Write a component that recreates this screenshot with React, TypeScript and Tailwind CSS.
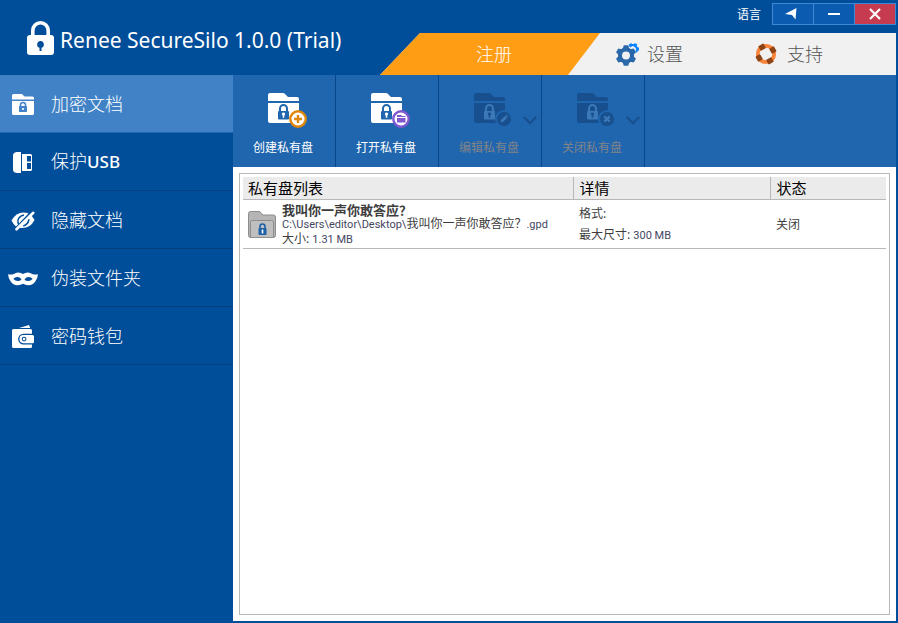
import React, { useState } from 'react';

const menuItems = [
  { id: 'encrypt', label: '加密文档', icon: <LockedFolderIcon /> },
  { id: 'usb', label: '保护', suffix: 'USB', icon: <UsbIcon /> },
  { id: 'hide', label: '隐藏文档', icon: <HiddenIcon /> },
  { id: 'disguise', label: '伪装文件夹', icon: <MaskIcon /> },
  { id: 'wallet', label: '密码钱包', icon: <WalletIcon /> },
];

const tools: { label: string; badge: Badge; disabled: boolean }[] = [
  { label: '创建私有盘', badge: 'add', disabled: false },
  { label: '打开私有盘', badge: 'open', disabled: false },
  { label: '编辑私有盘', badge: 'edit', disabled: true },
  { label: '关闭私有盘', badge: 'close', disabled: true },
];

const silos = [
  {
    name: '我叫你一声你敢答应？',
    folder: 'C:\\Users\\editor\\Desktop\\',
    extension: '.gpd',
    size: '1.31 MB',
    format: '',
    maxSize: '300 MB',
    status: '关闭',
  },
];

type Badge = 'add' | 'open' | 'edit' | 'close';

function LockedFolderIcon() {
  return (
    <svg width="22" height="21" viewBox="0 0 22 21" aria-hidden="true">
      <path fill="#fff" d="M0 5.500V1.500Q0 0 1.500 0H10l2.500 2.500h8Q22 2.500 22 4v1.500zM0 7h22v12.500q0 1.500-1.500 1.500h-19Q0 21 0 19.500z" />
      <path fill="none" stroke="#4182c6" strokeWidth="1.500" d="M8.500 13v-2a2.500 2.500 0 0 1 5 0v2" />
      <rect x="7" y="12" width="8" height="6" rx=".8" fill="#4182c6" />
      <circle cx="11" cy="15" r="1.100" fill="#fff" />
    </svg>
  );
}

function UsbIcon() {
  return (
    <svg width="20" height="21" viewBox="0 0 20 21" aria-hidden="true">
      <path fill="#fff" d="M8 0v21H3.500Q0 20.500 0 17.500v-14Q0 .5 3.500 0z" />
      <path fill="#fff" fillRule="evenodd" d="M9 2h8.500Q19 2 19 3.500v14q0 1.500-1.500 1.500H9zM14 4v5.500h4V4zm0 7v6h4v-6z" />
    </svg>
  );
}

function HiddenIcon() {
  return (
    <svg width="24" height="20" viewBox="0 0 24 20" aria-hidden="true">
      <path fill="#fff" d="M.5 9.500Q5 1.500 12.500 1.500q2.800 0 5 1L5 15.500Q2.500 13.500.500 9.500z" />
      <path fill="#fff" d="M20.300 4.500q1.700 1.500 3.200 4.500-4 8-12.500 8-1.300 0-2.400-.3z" />
      <path fill="none" stroke="#004d99" strokeWidth="1.600" d="M7.500 13a6 6 0 0 1 2-7.500Q11 4.300 13 4.300M17.800 8q0 5-5.500 7" />
      <path fill="none" stroke="#fff" strokeWidth="2.600" strokeLinecap="round" d="M22.300 1.800 5.500 18.300" />
    </svg>
  );
}

function MaskIcon() {
  return (
    <svg width="30" height="14" viewBox="0 0 31 14" aria-hidden="true">
      <path
        fill="#fff"
        fillRule="evenodd"
        d="M0 2q3 1 6.500-.5T12 .5q2 .2 3.500 1.300Q17 .7 19 .5q2-.5 5.500 1T31 2q-.3 4-2.800 7.700Q26 13.500 21 13.500q-3 0-5.500-1.500Q13 13.500 10 13.500q-5 0-7.200-3.800Q.3 6 0 2zm5.500 5Q8 9.500 11 9q2-.3 3-1.500Q12 4.800 9.500 5 7 5.200 5.500 7zM17 7.500q1 1.200 3 1.500 3 .5 5.500-2Q24 5.200 21.500 5 19 4.800 17 7.500z"
      />
    </svg>
  );
}

function WalletIcon() {
  return (
    <svg width="22" height="23" viewBox="0 0 22 23" aria-hidden="true">
      <path fill="#fff" d="M7 3 17 0l1.200 3zM1.500 4h17Q20 4 20 5.500V8.700h-8.500a5.400 5.400 0 0 0 0 10.800H20v2q0 1.500-1.500 1.500h-17Q0 23 0 21.500v-16Q0 4 1.500 4z" />
      <path fill="#fff" fillRule="evenodd" d="M11.500 10h9Q22 10 22 11.500V16.700q0 1.500-1.500 1.500h-9a4.100 4.100 0 0 1 0-8.200zm.6 1.700a2.400 2.400 0 1 0 0 4.800 2.400 2.400 0 0 0 0-4.800z" />
      <circle cx="12.100" cy="14.100" r="1.400" fill="#fff" />
    </svg>
  );
}

function ToolIcon({ badge, disabled }: { badge: Badge; disabled: boolean }) {
  const fill = disabled ? '#184f8e' : '#fff';
  return (
    <svg width="40" height="36" viewBox="0 0 40 36" aria-hidden="true">
      <path fill={fill} d="M0 8V2Q0 0 2 0h13q1 0 2 1l3 3h9q2 0 2 2v2zM0 10h31v18q0 2-2 2H2q-2 0-2-2z" />
      <path fill="none" stroke={disabled ? '#3b78b8' : '#2066af'} strokeWidth="2" d="M12 19v-3.500a3.500 3.500 0 0 1 7 0V19" />
      <rect x="10" y="18" width="11" height="8.500" rx="1" fill={disabled ? '#3b78b8' : '#2066af'} />
      <path fill={fill} d="M15.500 19.500a1.600 1.600 0 0 1 .8 3v2.300h-1.600v-2.300a1.600 1.600 0 0 1 .8-3z" />
      {disabled ? (
        <circle cx="30" cy="26" r="8" fill="#184f8e" stroke="#2066af" strokeWidth="2" />
      ) : (
        <circle cx="30" cy="26" r="7.700" fill="#fff" stroke={badge === 'add' ? '#df870c' : '#7f58cf'} strokeWidth="2.400" />
      )}
      {badge === 'add' && <path stroke="#df870c" strokeWidth="2.400" d="M30 22v8M26 26h8" />}
      {badge === 'open' && <path fill="#7f58cf" d="M26 22h4l1 1h3.500v1H26zM26 25h8.500v4.500H26z" />}
      {badge === 'edit' && <path fill="#3b78b8" d="m26.500 29.500.7-2.700 3.800-3.800 2 2-3.800 3.800zM31.500 22.500l.8-.8 2 2-.8.8z" />}
      {badge === 'close' && <path stroke="#3b78b8" strokeWidth="2.400" d="m27.300 23.300 5.400 5.400m0-5.400-5.400 5.400" />}
    </svg>
  );
}

function GearIcon() {
  return (
    <svg width="23" height="23" viewBox="0 0 23 23" aria-hidden="true">
      <path fill="none" stroke="#0a84ff" strokeWidth="2.200" d="M13.500 3.600a4 4 0 0 1 6.500 5.400" />
      <g fill="#0a84ff">
        {[-30, 30, 90].map((a) => (
          <rect key={a} x="15.500" y="0" width="3" height="3" transform={`rotate(${a} 17 6)`} />
        ))}
      </g>
      <circle cx="10" cy="12.500" r="6" fill="none" stroke="#2968a9" strokeWidth="4" />
      <g fill="#2968a9">
        {[0, 60, 120, 180, 240, 300].map((a) => (
          <path key={a} d="M6.500 6.500 7.800 2.300h4.400l1.300 4.200z" transform={`rotate(${a} 10 12.500)`} />
        ))}
      </g>
    </svg>
  );
}

function LifeRingIcon() {
  return (
    <svg width="22" height="22" viewBox="0 0 22 22" aria-hidden="true">
      <circle cx="11" cy="11" r="8.200" fill="none" stroke="#fb8439" strokeWidth="3.800" />
      {[-30, 60, 150, 240].map((a) => (
        <rect key={a} x="16.200" y="8" width="5.400" height="6" rx=".8" fill="#8f4415" transform={`rotate(${a} 11 11)`} />
      ))}
    </svg>
  );
}

function DiskIcon() {
  return (
    <svg width="28" height="27" viewBox="0 0 28 27" aria-hidden="true">
      <path fill="#b5b5b5" stroke="#8d8d8d" d="M.5 24.500v-22Q.5.500 2.500.500H11q1 0 1.800 1l2 2.500h10.700q2 0 2 2v18.500q0 2-2 2h-23q-2 0-2-2z" />
      <path fill="#bfbfbf" stroke="#8d8d8d" d="M2.500 26V11.500q0-2 2-2h19q2 0 2 2V26" />
      <path fill="none" stroke="#1f61a8" strokeWidth="1.600" d="M12 18v-2.500a2.500 2.500 0 0 1 5 0V18" />
      <rect x="10.500" y="17" width="8" height="7" rx=".8" fill="#1f61a8" />
      <path fill="#fff" d="M13.700 18.500h1.600v4h-1.600z" />
    </svg>
  );
}

function Header() {
  return (
    <header className="flex justify-between h-[75px] shrink-0">
      <div className="flex items-center gap-1.5 pl-[27px] text-white">
        <svg width="27" height="34" viewBox="0 0 27 34" aria-hidden="true">
          <path fill="none" stroke="#fff" strokeWidth="3.600" d="M5.800 16V9.500a7.700 7.700 0 0 1 15.400 0V16" />
          <rect y="14" width="27" height="20" rx="3" fill="#fff" />
          <path fill="#004d99" d="M13.500 20a3.500 3.500 0 0 1 1 6.800V30h-2v-3.200a3.500 3.500 0 0 1 1-6.800z" />
        </svg>
        <h1 className="pt-1 text-[21px] leading-7 whitespace-nowrap">Renee SecureSilo 1.0.0 (Trial)</h1>
      </div>

      <div className="flex flex-col justify-between w-[516px]">
        {/* Window controls */}
        <div className="flex items-center justify-end pt-[3px] text-white">
          <span className="mr-[11px] pt-0.5 text-xs">语言</span>
          <div className="flex h-[22px] border border-[#3f87d2] bg-[#0b5bb0]">
            <button aria-label="语言" className="w-10 pr-1 flex items-center justify-center">
              <svg width="12" height="12" viewBox="0 0 12 12">
                <path fill="#fff" d="M0 6 11.500 0 10.500 11.500 7 7z" />
              </svg>
            </button>
            <button aria-label="最小化" className="w-[42px] flex items-center justify-center border-x border-[#3f87d2]">
              <svg width="12" height="2" viewBox="0 0 12 2">
                <path fill="#fff" d="M0 0h12v2H0z" />
              </svg>
            </button>
            <button aria-label="关闭" className="w-10 flex items-center justify-center bg-[#c73b51]">
              <svg width="12" height="12" viewBox="0 0 12 12">
                <path stroke="#fff" strokeWidth="2.200" d="m1 1 10 10M11 1 1 11" />
              </svg>
            </button>
          </div>
        </div>

        {/* Slanted tabs */}
        <nav className="flex h-[42px] bg-[#f1f1f1] text-lg font-light text-[#555] [clip-path:polygon(40px_0,100%_0,100%_100%,0_100%)]">
          <button className="w-[220px] pl-2 bg-[#ff9d14] text-white [clip-path:polygon(0_0,100%_0,188px_100%,0_100%)]">
            注册
          </button>
          <button className="flex items-center gap-2 pl-4">
            <GearIcon />
            设置
          </button>
          <button className="flex items-center gap-2.5 pl-[72px]">
            <LifeRingIcon />
            支持
          </button>
        </nav>
      </div>
    </header>
  );
}

function Toolbar() {
  return (
    <div className="flex h-[92px] shrink-0 bg-[#2066af]">
      {tools.map((tool) => (
        <button
          key={tool.label}
          disabled={tool.disabled}
          className={`relative flex flex-col items-center w-[103px] pt-[18px] border-r border-[#07478a] text-xs ${
            tool.disabled ? 'text-[#808388]' : 'text-white'
          }`}
        >
          <span className="pl-2">
            <ToolIcon badge={tool.badge} disabled={tool.disabled} />
          </span>
          <span className="mt-[11px] pr-0.5">{tool.label}</span>
          {tool.disabled && (
            <svg className="absolute right-1 top-[41px]" width="14" height="9" viewBox="0 0 14 9" aria-hidden="true">
              <path fill="none" stroke="#184f8e" strokeWidth="2.200" d="m.8 1 6.200 6.200L13.200 1" />
            </svg>
          )}
        </button>
      ))}
    </div>
  );
}

function SiloTable() {
  return (
    <table className="w-full table-fixed border-collapse text-left text-[#3d3d3d]">
      <thead>
        <tr className="h-[22px] bg-[#ebebeb] border-b border-[#b8b8b8] text-[15px] leading-5 text-black">
          <th className="w-[330px] py-0 pl-[5px] border-r border-[#b8b8b8] font-normal">私有盘列表</th>
          <th className="w-[197px] py-0 pl-1.5 border-r border-[#b8b8b8] font-normal">详情</th>
          <th className="py-0 pl-1.5 font-normal">状态</th>
        </tr>
      </thead>
      <tbody className="text-xs">
        {silos.map((silo) => (
          <tr key={silo.name} className="h-[49px] border-b border-[#b8b8b8]">
            <td className="p-0 pt-0.5">
              <div className="flex items-center gap-1.5 pl-[5px] whitespace-nowrap">
                <DiskIcon />
                <div className="leading-[14px]">
                  <p className="text-[13px] leading-[14px] font-bold">{silo.name}</p>
                  <p>
                    <span className="font-[Roboto] text-[11px] text-[#44465f]">{silo.folder}</span>
                    {silo.name}
                    <span className="font-[Roboto] text-[11px] text-[#44465f]">{silo.extension}</span>
                  </p>
                  <p>
                    大小: <span className="font-[Roboto] text-[11px] text-[#44465f]">{silo.size}</span>
                  </p>
                </div>
              </div>
            </td>
            <td className="p-0 pt-0.5 pl-1.5 leading-[21px]">
              <p>格式:{silo.format}</p>
              <p>
                最大尺寸: <span className="font-[Roboto] text-[11px] text-[#44465f]">{silo.maxSize}</span>
              </p>
            </td>
            <td className="p-0 pt-0.5 pl-1.5">{silo.status}</td>
          </tr>
        ))}
      </tbody>
    </table>
  );
}

export default function App() {
  const [active, setActive] = useState('encrypt');

  return (
    <div className="flex flex-col min-h-screen pr-0.5 pb-0.5 bg-[#004d99] font-['Noto_Sans','Noto_Sans_CJK_SC',sans-serif]">
      <Header />
      <div className="flex flex-1">
        {/* Sidebar */}
        <nav className="w-[233px] shrink-0">
          {menuItems.map((item) => (
            <button
              key={item.id}
              onClick={() => setActive(item.id)}
              className={`flex items-center w-full h-[58px] pl-2 gap-[13px] border-b text-lg font-light text-white ${
                active === item.id ? 'bg-[#4182c6] border-[#2066af]' : 'border-[#053f7d]'
              }`}
            >
              <span className="w-[30px] pt-0.5 flex justify-center">{item.icon}</span>
              <span>
                {item.label}
                {item.suffix && <span className="text-[17px] font-medium">{item.suffix}</span>}
              </span>
            </button>
          ))}
        </nav>

        <main className="flex flex-col flex-1 min-w-0">
          <Toolbar />
          <div className="flex flex-1 p-1.5 bg-white">
            <div className="flex-1 min-w-0 p-[3px] border border-[#b8b8b8]">
              <SiloTable />
            </div>
          </div>
        </main>
      </div>
    </div>
  );
}
